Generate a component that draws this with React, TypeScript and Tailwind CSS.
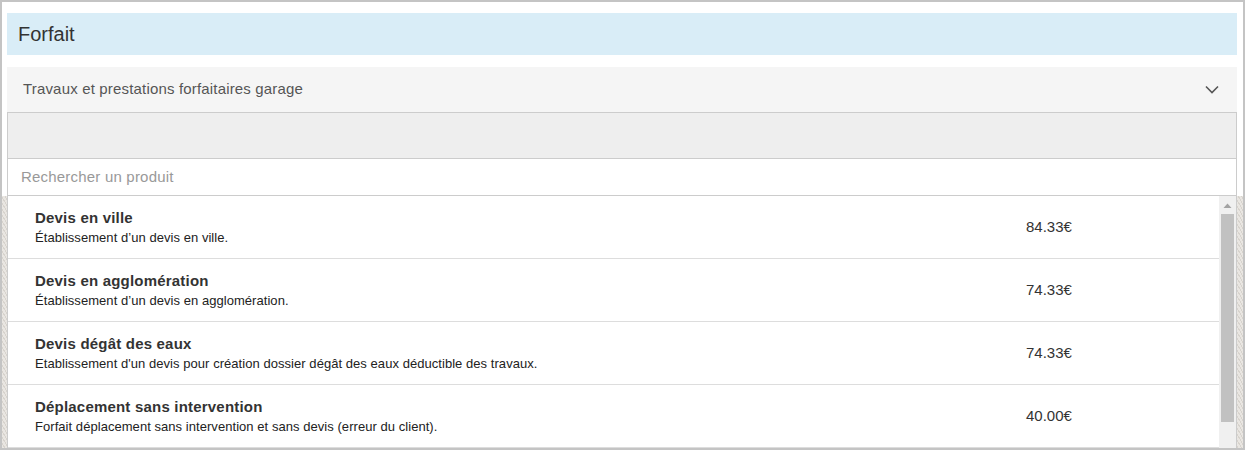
import React from "react";

const produits = [
  {
    titre: "Devis en ville",
    desc: "Établissement d’un devis en ville.",
    prix: "84.33€",
  },
  {
    titre: "Devis en agglomération",
    desc: "Établissement d’un devis en agglomération.",
    prix: "74.33€",
  },
  {
    titre: "Devis dégât des eaux",
    desc: "Etablissement d'un devis pour création dossier dégât des eaux déductible des travaux.",
    prix: "74.33€",
  },
  {
    titre: "Déplacement sans intervention",
    desc: "Forfait déplacement sans intervention et sans devis (erreur du client).",
    prix: "40.00€",
  },
];

export default function App() {
  return (
    <div className="w-[1245px] h-[450px] overflow-hidden border-2 border-[#c4c4c4] bg-white flex flex-col font-['Liberation_Sans',Arial,sans-serif] text-[#333]">
      {/* Haut : titre, sélection, recherche */}
      <div className="pl-[5px] pr-[6px] pt-[11px] flex flex-col">
        <div className="h-[42px] bg-[#d9edf7] pl-[11px] flex items-center text-[20px] leading-[22px]">
          Forfait
        </div>

        <div className="mt-[12px] h-[45px] bg-[#f5f5f5] pl-[16px] pr-[18px] flex items-center justify-between">
          <span className="text-[15px] tracking-[0.17px] text-[#555]">
            Travaux et prestations forfaitaires garage
          </span>
          <svg width="14" height="9" viewBox="0 0 14 9" fill="none">
            <polyline
              points="1,1.5 7,7.5 13,1.5"
              stroke="#555"
              strokeWidth="1.6"
            />
          </svg>
        </div>

        <div className="h-[47px] bg-[#eeeeee] border border-[#cccccc]" />

        <div className="h-[37px] border-l border-r border-b border-[#cccccc] flex items-center pl-[13px]">
          <span className="text-[15px] tracking-[0.2px] text-[#999]">
            Rechercher un produit
          </span>
        </div>
      </div>

      {/* Liste des produits */}
      <div className="flex-1 pl-[5px] pr-[6px] bg-[repeating-linear-gradient(60deg,#e9e6e2_0px,#e9e6e2_2px,#d7d3cd_2px,#d7d3cd_3px)]">
        <div className="h-[252px] bg-white border-l border-r border-[#cccccc] flex overflow-hidden">
          <div className="flex-1 flex flex-col">
            {produits.map((p) => (
              <div
                key={p.titre}
                className="shrink-0 h-[63px] border-b border-[#dddddd] flex items-center"
              >
                <div className="flex-1 pl-[27px] pt-[12px] pb-[12px] self-stretch">
                  <div className="text-[15px] leading-[20px] font-bold tracking-[0.2px] text-[#333]">
                    {p.titre}
                  </div>
                  <div className="mt-[2px] text-[13px] leading-[16px] tracking-[0.05px] text-[#222]">
                    {p.desc}
                  </div>
                </div>
                <div className="w-[193px] text-[15px] text-[#333]">{p.prix}</div>
              </div>
            ))}
          </div>

          {/* Barre de défilement */}
          <div className="w-[17px] bg-[#f0f0f0] flex flex-col items-center">
            <svg width="9" height="6" viewBox="0 0 9 6" className="mt-[7px]">
              <polygon points="4.5,0.5 8.5,5 0.5,5" fill="#a3a3a3" />
            </svg>
            <div className="mt-[5px] w-[13px] h-[208px] bg-[#c1c1c1]" />
          </div>
        </div>
      </div>
    </div>
  );
}
